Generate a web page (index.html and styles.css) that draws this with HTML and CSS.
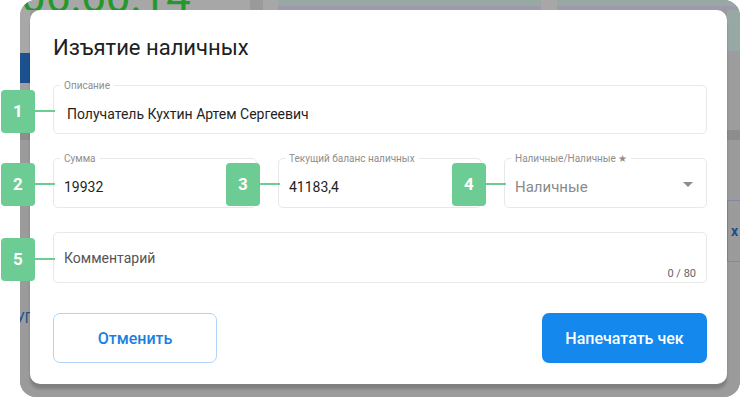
FILE: index.html
```html
<!DOCTYPE html>
<html lang="ru">

<head>
    <meta charset="UTF-8">
    <meta name="viewport" content="width=device-width, initial-scale=1.0">
    <title>Изъятие наличных</title>
    <link rel="stylesheet" href="styles.css">
</head>

<body>
    <div class="stage">
        <!-- затемнённый экран кассы под модальным окном -->
        <div class="app">
            <div class="app-top">
                <div class="seg seg-gray seg-clock"><span class="clock">06:60:14</span></div>
                <div class="seg seg-dark" style="width: 13px"></div>
                <div class="seg seg-gray" style="width: 15px"></div>
                <div class="seg seg-green" style="width: 263px"></div>
                <div class="seg seg-gray" style="width: 16px"></div>
                <div class="seg seg-green seg-fill"></div>
            </div>
            <div class="app-body">
                <div class="side-left">
                    <div class="sl-light"></div>
                    <div class="sl-blue"></div>
                    <div class="sl-mid"></div>
                    <div class="sl-band"></div>
                    <div class="sl-rest"><span class="sl-text">УГ</span></div>
                </div>
                <div class="app-center"></div>
                <div class="side-right">
                    <div class="sr-green"></div>
                    <div class="sr-mid"></div>
                    <div class="sr-band"></div>
                    <div class="sr-gap"></div>
                    <div class="sr-box">х</div>
                    <div class="sr-rest"></div>
                </div>
            </div>
        </div>

        <div class="modal">
            <div class="modal-title">Изъятие наличных</div>

            <div class="field field-wide">
                <span class="field-label">Описание</span>
                <span class="field-value">Получатель Кухтин Артем Сергеевич</span>
                <span class="marker">1</span>
            </div>

            <div class="field-row">
                <div class="field">
                    <span class="field-label">Сумма</span>
                    <span class="field-value">19932</span>
                    <span class="marker">2</span>
                </div>
                <div class="field">
                    <span class="field-label">Текущий баланс наличных</span>
                    <span class="field-value">41183,4</span>
                    <span class="marker">3</span>
                </div>
                <div class="field field-select">
                    <span class="field-label">Наличные/Наличные ★</span>
                    <span class="field-value placeholder">Наличные</span>
                    <span class="arrow"></span>
                    <span class="marker">4</span>
                </div>
            </div>

            <div class="field field-comment">
                <span class="comment-text">Комментарий</span>
                <span class="counter">0 / 80</span>
                <span class="marker">5</span>
            </div>

            <div class="actions">
                <button class="btn btn-outline">Отменить</button>
                <button class="btn btn-primary">Напечатать чек</button>
            </div>
        </div>
    </div>
</body>

</html>
```

FILE: styles.css
```css
body {
    margin: 0;
    padding: 0;
    background-color: white;
    font-family: Roboto, "Liberation Sans", sans-serif;
}

.stage {
    position: relative;
    width: 740px;
    height: 398px;
}

/* экран под модальным окном */
.app {
    margin-left: 20px;
    width: 720px;
    height: 397px;
    border-radius: 16px;
    overflow: hidden;
    background-color: #9b9b9b;
    display: flex;
    flex-direction: column;
}

.app-top {
    display: flex;
    height: 10px;
    flex-shrink: 0;
}

.seg {
    height: 10px;
    box-sizing: border-box;
}

.seg-gray {
    background-color: #a7a7a7;
}

.seg-dark {
    background-color: #9a9a9a;
}

.seg-green {
    background-color: #98a8a4;
    border-bottom: 4px solid #9d9bab;
}

.seg-fill {
    flex: 1;
}

.seg-clock {
    width: 230px;
    padding-left: 1px;
    overflow: visible;
}

.clock {
    display: block;
    margin-top: -25px;
    font-size: 44px;
    line-height: 44px;
    color: #22992a;
    white-space: nowrap;
}

.app-body {
    flex: 1;
    display: flex;
}

.side-left {
    width: 10px;
    display: flex;
    flex-direction: column;
}

.sl-light {
    height: 43px;
    background-color: #a8a8a8;
}

.sl-blue {
    height: 30px;
    background-color: #1c5190;
}

.sl-mid {
    height: 50px;
    background-color: #a0a0a0;
}

.sl-band {
    height: 7px;
    background-color: #8e8e8e;
}

.sl-rest {
    flex: 1;
    background-color: #9b9b9b;
    padding-top: 171px;
}

.sl-text {
    display: block;
    margin-left: -4px;
    font-size: 14px;
    line-height: 14px;
    color: #1d4f8c;
    white-space: nowrap;
}

.app-center {
    flex: 1;
    background-color: #9b9b9b;
}

.side-right {
    width: 13px;
    display: flex;
    flex-direction: column;
}

.sr-green {
    height: 41px;
    background-color: #98a8a4;
    border-bottom: 2px solid #9d9bab;
}

.sr-mid {
    height: 77px;
    background-color: #9d9d9d;
}

.sr-band {
    height: 10px;
    background-color: #8d8d8d;
}

.sr-gap {
    height: 60px;
    background-color: #9b9b9b;
}

.sr-box {
    height: 60px;
    border-top: 1px solid #7f89a4;
    border-bottom: 1px solid #7f89a4;
    border-left: 1px solid #7f89a4;
    padding-left: 3px;
    font-size: 14px;
    font-weight: bold;
    line-height: 60px;
    color: #1d4f8c;
}

.sr-rest {
    flex: 1;
    background-color: #9b9b9b;
}

/* модальное окно */
.modal {
    position: absolute;
    left: 30px;
    top: 10px;
    width: 697px;
    height: 374px;
    box-sizing: border-box;
    padding: 25px 20px 21px 23px;
    background-color: white;
    border-radius: 10px;
    box-shadow: 0 5px 3px rgba(0, 0, 0, 0.18);
    display: flex;
    flex-direction: column;
}

.modal-title {
    font-size: 22px;
    line-height: 26px;
    color: #212121;
    margin-bottom: 24px;
}

.field {
    position: relative;
    height: 50px;
    box-sizing: border-box;
    border: 1px solid #e8e8e8;
    border-radius: 5px;
    display: flex;
    align-items: center;
    padding: 8px 10px 0 10px;
}

.field-wide {
    height: 49px;
    padding-left: 13px;
    margin-bottom: 24px;
}

.field-row {
    display: grid;
    grid-template-columns: 204px 204px 1fr;
    column-gap: 21px;
    margin-bottom: 24px;
}

.field-row .field:nth-child(3) {
    margin-left: 1px;
}

.field-label {
    position: absolute;
    top: -6px;
    left: 6px;
    padding: 0 4px;
    background-color: white;
    font-size: 10px;
    line-height: 12px;
    color: #8e8e8e;
    white-space: nowrap;
}

.field-value {
    font-size: 14px;
    color: #1f1f1f;
}

.placeholder {
    font-size: 15px;
    color: #8a8a8a;
}

.arrow {
    position: absolute;
    right: 13px;
    top: 23px;
    width: 0;
    height: 0;
    border-left: 5px solid transparent;
    border-right: 5px solid transparent;
    border-top: 5px solid #8c8c8c;
}

.field-comment {
    height: 51px;
    padding-top: 0;
    margin-bottom: 30px;
}

.comment-text {
    font-size: 14px;
    color: #555555;
}

.counter {
    position: absolute;
    right: 10px;
    bottom: 2px;
    font-size: 11px;
    line-height: 12px;
    color: #666666;
}

/* зелёные номера-сноски */
.marker {
    position: absolute;
    right: calc(100% + 19px);
    top: 50%;
    margin-top: -20px;
    width: 34px;
    height: 43px;
    border-radius: 4px;
    background-color: #6dcb94;
    color: white;
    font-size: 17px;
    font-weight: bold;
    line-height: 43px;
    text-align: center;
}

.marker::after {
    content: "";
    position: absolute;
    left: 34px;
    top: 20px;
    width: 20px;
    height: 2px;
    background-color: #6dcb94;
}

.actions {
    display: flex;
    justify-content: space-between;
}

.btn {
    width: 165px;
    height: 50px;
    border-radius: 7px;
    font-family: Roboto, "Liberation Sans", sans-serif;
    font-size: 16px;
    font-weight: 500;
    cursor: pointer;
}

.btn-outline {
    width: 164px;
    background-color: white;
    border: 1px solid #b3d3f6;
    color: #1a80e0;
}

.btn-primary {
    background-color: #1488ec;
    border: none;
    color: white;
}
```
